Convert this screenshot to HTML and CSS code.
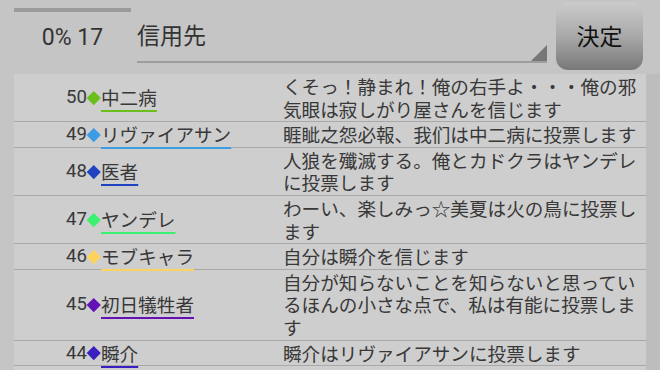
FILE: index.html
```html
<!DOCTYPE html>
<html lang="ja">

<head>
    <meta charset="UTF-8">
    <meta name="viewport" content="width=device-width, initial-scale=1.0">
    <title>投票</title>
    <link rel="stylesheet" href="styles.css">
</head>

<body>

    <div class="header">
        <div class="progress">
            <div class="progress-bar"></div>
            <div class="progress-label">0% 17</div>
        </div>
        <div class="field">
            信用先
            <span class="field-corner"></span>
        </div>
        <button class="decide">決定</button>
    </div>

    <div class="main">
        <div class="list">
            <div class="row">
                <div class="who">50<span class="mark" style="background:#6abf1d"></span><span class="name" style="text-decoration-color:#6abf1d">中二病</span></div>
                <div class="msg">くそっ！静まれ！俺の右手よ・・・俺の邪気眼は寂しがり屋さんを信じます</div>
            </div>
            <div class="row">
                <div class="who">49<span class="mark" style="background:#3b9be3"></span><span class="name" style="text-decoration-color:#3b9be3">リヴァイアサン</span></div>
                <div class="msg">睚眦之怨必報、我们は中二病に投票します</div>
            </div>
            <div class="row">
                <div class="who">48<span class="mark" style="background:#1f43c0"></span><span class="name" style="text-decoration-color:#1f43c0">医者</span></div>
                <div class="msg">人狼を殲滅する。俺とカドクラはヤンデレに投票します</div>
            </div>
            <div class="row">
                <div class="who">47<span class="mark" style="background:#3cf072"></span><span class="name" style="text-decoration-color:#3cf072">ヤンデレ</span></div>
                <div class="msg">わーい、楽しみっ☆美夏は火の鳥に投票します</div>
            </div>
            <div class="row">
                <div class="who">46<span class="mark" style="background:#ffd25c"></span><span class="name" style="text-decoration-color:#ffd25c">モブキャラ</span></div>
                <div class="msg">自分は瞬介を信じます</div>
            </div>
            <div class="row">
                <div class="who">45<span class="mark" style="background:#6310b5"></span><span class="name" style="text-decoration-color:#6310b5">初日犠牲者</span></div>
                <div class="msg">自分が知らないことを知らないと思っているほんの小さな点で、私は有能に投票します</div>
            </div>
            <div class="row">
                <div class="who">44<span class="mark" style="background:#3a1fc0"></span><span class="name" style="text-decoration-color:#3a1fc0">瞬介</span></div>
                <div class="msg">瞬介はリヴァイアサンに投票します</div>
            </div>
        </div>
        <div class="gutter"></div>
    </div>

</body>

</html>
```

FILE: styles.css
```css
body {
    margin: 0;
    width: 660px;
    height: 370px;
    overflow: hidden;
    background: #c5c5c5;
    font-family: Roboto, "Noto Sans CJK JP", sans-serif;
    color: #383838;
}

.header {
    display: flex;
    height: 74px;
    padding-left: 14px;
}

.progress {
    width: 117px;
}

.progress-bar {
    height: 4px;
    margin-top: 8px;
    background: #9b9b9b;
}

.progress-label {
    margin-top: 12px;
    text-align: center;
    font-size: 23px;
    line-height: 28px;
    color: #333;
}

.field {
    position: relative;
    box-sizing: border-box;
    width: 410px;
    height: 63px;
    margin-left: 6px;
    padding-top: 18px;
    border-bottom: 2px solid #9d9d9d;
    font-family: "Noto Sans CJK JP", sans-serif;
    font-size: 23px;
    line-height: 32px;
    color: #333;
}

.field-corner {
    position: absolute;
    right: 0;
    bottom: 0;
    width: 16px;
    height: 16px;
    background: #777;
    clip-path: polygon(100% 0, 100% 100%, 0 100%);
}

.decide {
    width: 87px;
    height: 68px;
    margin: 2px 0 0 9px;
    border: none;
    border-radius: 12px;
    background: linear-gradient(#cbcbcb, #a9a9a9 50%, #787878);
    font-family: "Noto Sans CJK JP", sans-serif;
    font-size: 23px;
    color: #111;
    padding: 0 0 2px;
}

.main {
    display: flex;
    padding-left: 14px;
}

.list {
    width: 632px;
    background: #cecece;
}

.gutter {
    flex: 1;
    height: 300px;
    background: #bdbdbd;
}

.row {
    display: grid;
    grid-template-columns: 266px 1fr;
    padding: 1px 0;
    border-bottom: 1px solid #a9a9a9;
}

.who {
    display: flex;
    align-items: center;
    padding-left: 52px;
    font-size: 18.6px;
    line-height: 22.6px;
}

.mark {
    width: 9.5px;
    height: 9.5px;
    margin: 0 2.3px;
    transform: rotate(45deg);
}

.name {
    font-family: "Noto Sans CJK JP", sans-serif;
    text-decoration: underline;
    text-decoration-thickness: 2px;
    text-underline-offset: 5px;
}

.msg {
    padding: 0 3px;
    font-family: "Noto Sans CJK JP", sans-serif;
    font-size: 18.6px;
    line-height: 22.6px;
}
```
